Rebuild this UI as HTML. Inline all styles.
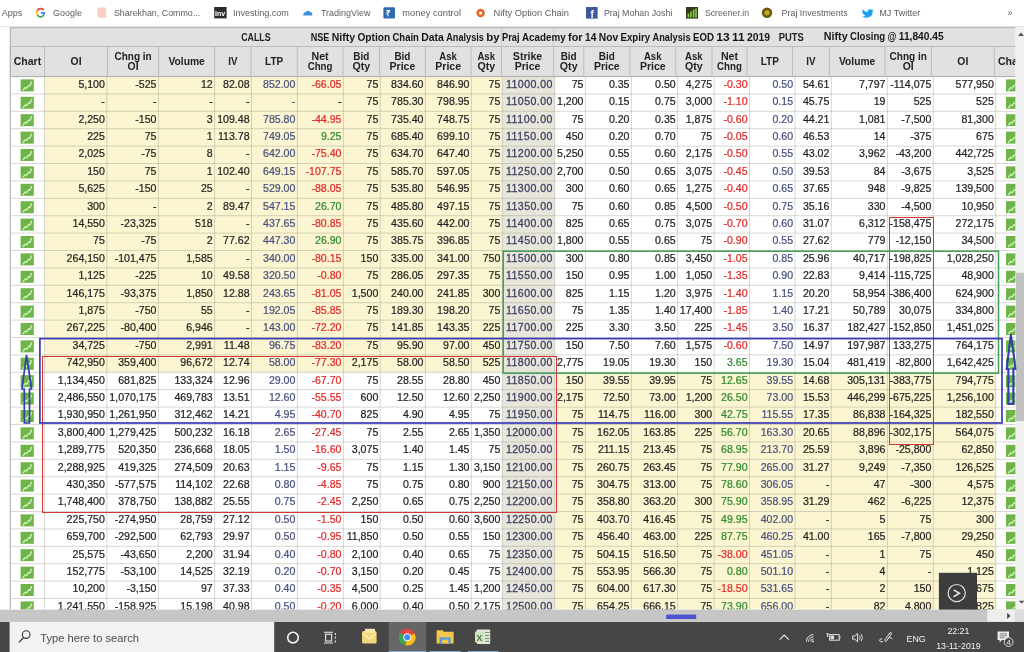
<!DOCTYPE html><html><head><meta charset="utf-8"><title>NSE Nifty Option Chain</title>
<style>html,body{margin:0;padding:0;background:#fff}body{width:1024px;height:652px;overflow:hidden;position:relative}svg{position:absolute;left:0;top:0;display:block;will-change:transform}text{font-family:"Liberation Sans",sans-serif}.d{font-size:10.6px;fill:#1f1f1f;text-anchor:end;stroke:#1f1f1f;stroke-width:0.22px}.h{font-size:10.5px;font-weight:bold;fill:#222;text-anchor:middle}.bk{font-size:9.3px;fill:#5a5d61}.tb{font-size:9.3px;fill:#f2f2f2}</style></head><body>
<svg width="1024" height="652" viewBox="0 0 1024 652">
<rect width="1024" height="652" fill="#fff"/>
<defs><clipPath id="vp"><rect x="0" y="26.8" width="1015.6" height="582.7"/></clipPath>
<g id="ci"><rect x="0" y="0" width="13.2" height="12" fill="#6fb448"/><polyline points="2.6,10.6 4.6,8.2 6.2,8.8 8,6 9.4,6.4 10.8,2.6" fill="none" stroke="#c4efae" stroke-width="1.5" stroke-linejoin="round" stroke-linecap="round"/></g>
</defs>
<rect x="0" y="0" width="1024" height="26.4" fill="#fff"/>
<rect x="0" y="26" width="1024" height="1.1" fill="#e4e4e4"/>
<g clip-path="url(#vp)">
<rect x="10.3" y="27.6" width="1019.7" height="48.9" fill="#e1e1e1"/>
<rect x="44.60" y="76.50" width="457.70" height="295.80" fill="#fbf5d1"/>
<rect x="554.70" y="372.30" width="441.00" height="261.00" fill="#fbf5d1"/>
<rect x="502.30" y="76.50" width="52.40" height="556.80" fill="#e8e6da"/>
<rect x="10.3" y="93.40" width="1019.7" height="1" fill="rgba(110,110,100,0.27)"/>
<rect x="10.3" y="110.80" width="1019.7" height="1" fill="rgba(110,110,100,0.27)"/>
<rect x="10.3" y="128.20" width="1019.7" height="1" fill="rgba(110,110,100,0.27)"/>
<rect x="10.3" y="145.60" width="1019.7" height="1" fill="rgba(110,110,100,0.27)"/>
<rect x="10.3" y="163.00" width="1019.7" height="1" fill="rgba(110,110,100,0.27)"/>
<rect x="10.3" y="180.40" width="1019.7" height="1" fill="rgba(110,110,100,0.27)"/>
<rect x="10.3" y="197.80" width="1019.7" height="1" fill="rgba(110,110,100,0.27)"/>
<rect x="10.3" y="215.20" width="1019.7" height="1" fill="rgba(110,110,100,0.27)"/>
<rect x="10.3" y="232.60" width="1019.7" height="1" fill="rgba(110,110,100,0.27)"/>
<rect x="10.3" y="250.00" width="1019.7" height="1" fill="rgba(110,110,100,0.27)"/>
<rect x="10.3" y="267.40" width="1019.7" height="1" fill="rgba(110,110,100,0.27)"/>
<rect x="10.3" y="284.80" width="1019.7" height="1" fill="rgba(110,110,100,0.27)"/>
<rect x="10.3" y="302.20" width="1019.7" height="1" fill="rgba(110,110,100,0.27)"/>
<rect x="10.3" y="319.60" width="1019.7" height="1" fill="rgba(110,110,100,0.27)"/>
<rect x="10.3" y="337.00" width="1019.7" height="1" fill="rgba(110,110,100,0.27)"/>
<rect x="10.3" y="354.40" width="1019.7" height="1" fill="rgba(110,110,100,0.27)"/>
<rect x="10.3" y="371.80" width="1019.7" height="1" fill="rgba(110,110,100,0.27)"/>
<rect x="10.3" y="389.20" width="1019.7" height="1" fill="rgba(110,110,100,0.27)"/>
<rect x="10.3" y="406.60" width="1019.7" height="1" fill="rgba(110,110,100,0.27)"/>
<rect x="10.3" y="424.00" width="1019.7" height="1" fill="rgba(110,110,100,0.27)"/>
<rect x="10.3" y="441.40" width="1019.7" height="1" fill="rgba(110,110,100,0.27)"/>
<rect x="10.3" y="458.80" width="1019.7" height="1" fill="rgba(110,110,100,0.27)"/>
<rect x="10.3" y="476.20" width="1019.7" height="1" fill="rgba(110,110,100,0.27)"/>
<rect x="10.3" y="493.60" width="1019.7" height="1" fill="rgba(110,110,100,0.27)"/>
<rect x="10.3" y="511.00" width="1019.7" height="1" fill="rgba(110,110,100,0.27)"/>
<rect x="10.3" y="528.40" width="1019.7" height="1" fill="rgba(110,110,100,0.27)"/>
<rect x="10.3" y="545.80" width="1019.7" height="1" fill="rgba(110,110,100,0.27)"/>
<rect x="10.3" y="563.20" width="1019.7" height="1" fill="rgba(110,110,100,0.27)"/>
<rect x="10.3" y="580.60" width="1019.7" height="1" fill="rgba(110,110,100,0.27)"/>
<rect x="10.3" y="598.00" width="1019.7" height="1" fill="rgba(110,110,100,0.27)"/>
<rect x="10.3" y="615.40" width="1019.7" height="1" fill="rgba(110,110,100,0.27)"/>
<rect x="10.3" y="632.80" width="1019.7" height="1" fill="rgba(110,110,100,0.27)"/>
<rect x="9.80" y="76.5" width="1" height="533.2" fill="rgba(110,110,100,0.27)"/>
<rect x="44.10" y="76.5" width="1" height="533.2" fill="rgba(110,110,100,0.27)"/>
<rect x="106.30" y="76.5" width="1" height="533.2" fill="rgba(110,110,100,0.27)"/>
<rect x="157.90" y="76.5" width="1" height="533.2" fill="rgba(110,110,100,0.27)"/>
<rect x="214.10" y="76.5" width="1" height="533.2" fill="rgba(110,110,100,0.27)"/>
<rect x="251.00" y="76.5" width="1" height="533.2" fill="rgba(110,110,100,0.27)"/>
<rect x="296.80" y="76.5" width="1" height="533.2" fill="rgba(110,110,100,0.27)"/>
<rect x="342.90" y="76.5" width="1" height="533.2" fill="rgba(110,110,100,0.27)"/>
<rect x="379.70" y="76.5" width="1" height="533.2" fill="rgba(110,110,100,0.27)"/>
<rect x="424.90" y="76.5" width="1" height="533.2" fill="rgba(110,110,100,0.27)"/>
<rect x="470.90" y="76.5" width="1" height="533.2" fill="rgba(110,110,100,0.27)"/>
<rect x="501.80" y="76.5" width="1" height="533.2" fill="rgba(110,110,100,0.27)"/>
<rect x="554.20" y="76.5" width="1" height="533.2" fill="rgba(110,110,100,0.27)"/>
<rect x="584.90" y="76.5" width="1" height="533.2" fill="rgba(110,110,100,0.27)"/>
<rect x="630.90" y="76.5" width="1" height="533.2" fill="rgba(110,110,100,0.27)"/>
<rect x="677.10" y="76.5" width="1" height="533.2" fill="rgba(110,110,100,0.27)"/>
<rect x="713.60" y="76.5" width="1" height="533.2" fill="rgba(110,110,100,0.27)"/>
<rect x="749.00" y="76.5" width="1" height="533.2" fill="rgba(110,110,100,0.27)"/>
<rect x="794.50" y="76.5" width="1" height="533.2" fill="rgba(110,110,100,0.27)"/>
<rect x="830.80" y="76.5" width="1" height="533.2" fill="rgba(110,110,100,0.27)"/>
<rect x="886.90" y="76.5" width="1" height="533.2" fill="rgba(110,110,100,0.27)"/>
<rect x="932.80" y="76.5" width="1" height="533.2" fill="rgba(110,110,100,0.27)"/>
<rect x="995.20" y="76.5" width="1" height="533.2" fill="rgba(110,110,100,0.27)"/>
<rect x="9.80" y="76.5" width="1" height="533.2" fill="#b4b4b4"/>
<rect x="10.3" y="27.1" width="1019.7" height="1.1" fill="#b2b2b2"/>
<rect x="10.3" y="46.0" width="1019.7" height="1" fill="#bcbcbc"/>
<rect x="10.3" y="75.9" width="1019.7" height="1.2" fill="#b4b4b4"/>
<rect x="9.80" y="46.5" width="1" height="30.0" fill="#bcbcbc"/>
<rect x="44.10" y="46.5" width="1" height="30.0" fill="#bcbcbc"/>
<rect x="107.10" y="46.5" width="1" height="30.0" fill="#bcbcbc"/>
<rect x="158.10" y="46.5" width="1" height="30.0" fill="#bcbcbc"/>
<rect x="214.10" y="46.5" width="1" height="30.0" fill="#bcbcbc"/>
<rect x="250.50" y="46.5" width="1" height="30.0" fill="#bcbcbc"/>
<rect x="296.70" y="46.5" width="1" height="30.0" fill="#bcbcbc"/>
<rect x="342.40" y="46.5" width="1" height="30.0" fill="#bcbcbc"/>
<rect x="379.10" y="46.5" width="1" height="30.0" fill="#bcbcbc"/>
<rect x="424.80" y="46.5" width="1" height="30.0" fill="#bcbcbc"/>
<rect x="470.50" y="46.5" width="1" height="30.0" fill="#bcbcbc"/>
<rect x="501.00" y="46.5" width="1" height="30.0" fill="#bcbcbc"/>
<rect x="553.10" y="46.5" width="1" height="30.0" fill="#bcbcbc"/>
<rect x="583.30" y="46.5" width="1" height="30.0" fill="#bcbcbc"/>
<rect x="629.30" y="46.5" width="1" height="30.0" fill="#bcbcbc"/>
<rect x="675.20" y="46.5" width="1" height="30.0" fill="#bcbcbc"/>
<rect x="711.50" y="46.5" width="1" height="30.0" fill="#bcbcbc"/>
<rect x="746.50" y="46.5" width="1" height="30.0" fill="#bcbcbc"/>
<rect x="792.00" y="46.5" width="1" height="30.0" fill="#bcbcbc"/>
<rect x="828.80" y="46.5" width="1" height="30.0" fill="#bcbcbc"/>
<rect x="884.50" y="46.5" width="1" height="30.0" fill="#bcbcbc"/>
<rect x="930.90" y="46.5" width="1" height="30.0" fill="#bcbcbc"/>
<rect x="993.80" y="46.5" width="1" height="30.0" fill="#bcbcbc"/>
<rect x="9.80" y="27.6" width="1" height="48.9" fill="#adadad"/>
<rect x="501.00" y="27.6" width="1" height="18.9" fill="#cdcdcd"/>
<rect x="553.10" y="27.6" width="1" height="18.9" fill="#cdcdcd"/>
<text class="h" style="text-anchor:start" x="13.73" y="65.1" textLength="27.45" lengthAdjust="spacingAndGlyphs">Chart</text>
<text class="h" style="text-anchor:start" x="70.60" y="65.1" textLength="11.00" lengthAdjust="spacingAndGlyphs">OI</text>
<text class="h" style="text-anchor:start" x="114.45" y="59.5" textLength="37.30" lengthAdjust="spacingAndGlyphs">Chng in</text>
<text class="h" style="text-anchor:start" x="127.60" y="69.6" textLength="11.00" lengthAdjust="spacingAndGlyphs">OI</text>
<text class="h" style="text-anchor:start" x="168.45" y="65.1" textLength="36.30" lengthAdjust="spacingAndGlyphs">Volume</text>
<text class="h" style="text-anchor:start" x="228.20" y="65.1" textLength="9.20" lengthAdjust="spacingAndGlyphs">IV</text>
<text class="h" style="text-anchor:start" x="265.05" y="65.1" textLength="18.10" lengthAdjust="spacingAndGlyphs">LTP</text>
<text class="h" style="text-anchor:start" x="311.50" y="59.5" textLength="17.10" lengthAdjust="spacingAndGlyphs">Net</text>
<text class="h" style="text-anchor:start" x="307.65" y="69.6" textLength="24.80" lengthAdjust="spacingAndGlyphs">Chng</text>
<text class="h" style="text-anchor:start" x="353.25" y="59.5" textLength="16.00" lengthAdjust="spacingAndGlyphs">Bid</text>
<text class="h" style="text-anchor:start" x="352.40" y="69.6" textLength="17.70" lengthAdjust="spacingAndGlyphs">Qty</text>
<text class="h" style="text-anchor:start" x="394.45" y="59.5" textLength="16.00" lengthAdjust="spacingAndGlyphs">Bid</text>
<text class="h" style="text-anchor:start" x="389.60" y="69.6" textLength="25.70" lengthAdjust="spacingAndGlyphs">Price</text>
<text class="h" style="text-anchor:start" x="439.35" y="59.5" textLength="17.60" lengthAdjust="spacingAndGlyphs">Ask</text>
<text class="h" style="text-anchor:start" x="435.30" y="69.6" textLength="25.70" lengthAdjust="spacingAndGlyphs">Price</text>
<text class="h" style="text-anchor:start" x="477.45" y="59.5" textLength="17.60" lengthAdjust="spacingAndGlyphs">Ask</text>
<text class="h" style="text-anchor:start" x="477.40" y="69.6" textLength="17.70" lengthAdjust="spacingAndGlyphs">Qty</text>
<text class="h" style="text-anchor:start" x="512.82" y="59.5" textLength="29.45" lengthAdjust="spacingAndGlyphs">Strike</text>
<text class="h" style="text-anchor:start" x="514.70" y="69.6" textLength="25.70" lengthAdjust="spacingAndGlyphs">Price</text>
<text class="h" style="text-anchor:start" x="560.70" y="59.5" textLength="16.00" lengthAdjust="spacingAndGlyphs">Bid</text>
<text class="h" style="text-anchor:start" x="559.85" y="69.6" textLength="17.70" lengthAdjust="spacingAndGlyphs">Qty</text>
<text class="h" style="text-anchor:start" x="598.80" y="59.5" textLength="16.00" lengthAdjust="spacingAndGlyphs">Bid</text>
<text class="h" style="text-anchor:start" x="593.95" y="69.6" textLength="25.70" lengthAdjust="spacingAndGlyphs">Price</text>
<text class="h" style="text-anchor:start" x="643.95" y="59.5" textLength="17.60" lengthAdjust="spacingAndGlyphs">Ask</text>
<text class="h" style="text-anchor:start" x="639.90" y="69.6" textLength="25.70" lengthAdjust="spacingAndGlyphs">Price</text>
<text class="h" style="text-anchor:start" x="685.05" y="59.5" textLength="17.60" lengthAdjust="spacingAndGlyphs">Ask</text>
<text class="h" style="text-anchor:start" x="685.00" y="69.6" textLength="17.70" lengthAdjust="spacingAndGlyphs">Qty</text>
<text class="h" style="text-anchor:start" x="720.95" y="59.5" textLength="17.10" lengthAdjust="spacingAndGlyphs">Net</text>
<text class="h" style="text-anchor:start" x="717.10" y="69.6" textLength="24.80" lengthAdjust="spacingAndGlyphs">Chng</text>
<text class="h" style="text-anchor:start" x="760.70" y="65.1" textLength="18.10" lengthAdjust="spacingAndGlyphs">LTP</text>
<text class="h" style="text-anchor:start" x="806.30" y="65.1" textLength="9.20" lengthAdjust="spacingAndGlyphs">IV</text>
<text class="h" style="text-anchor:start" x="839.00" y="65.1" textLength="36.30" lengthAdjust="spacingAndGlyphs">Volume</text>
<text class="h" style="text-anchor:start" x="889.55" y="59.5" textLength="37.30" lengthAdjust="spacingAndGlyphs">Chng in</text>
<text class="h" style="text-anchor:start" x="902.70" y="69.6" textLength="11.00" lengthAdjust="spacingAndGlyphs">OI</text>
<text class="h" style="text-anchor:start" x="957.35" y="65.1" textLength="11.00" lengthAdjust="spacingAndGlyphs">OI</text>
<text class="h" style="text-anchor:start" x="997.88" y="65.1" textLength="27.45" lengthAdjust="spacingAndGlyphs">Chart</text>
<text class="h" style="text-anchor:start;font-size:10.4px" x="241.2" y="40.7" textLength="29.4" lengthAdjust="spacingAndGlyphs">CALLS</text>
<text style="font-weight:bold;font-size:10.7px;fill:#151515" x="310.75" y="40.6" textLength="18.60" lengthAdjust="spacingAndGlyphs">NSE</text>
<text style="font-weight:bold;font-size:10.7px;fill:#151515" x="331.75" y="40.6" textLength="23.35" lengthAdjust="spacingAndGlyphs">Nifty</text>
<text style="font-weight:bold;font-size:10.7px;fill:#151515" x="357.50" y="40.6" textLength="32.60" lengthAdjust="spacingAndGlyphs">Option</text>
<text style="font-weight:bold;font-size:10.7px;fill:#151515" x="392.50" y="40.6" textLength="26.35" lengthAdjust="spacingAndGlyphs">Chain</text>
<text style="font-weight:bold;font-size:10.7px;fill:#151515" x="421.25" y="40.6" textLength="22.60" lengthAdjust="spacingAndGlyphs">Data</text>
<text style="font-weight:bold;font-size:10.7px;fill:#151515" x="446.25" y="40.6" textLength="37.60" lengthAdjust="spacingAndGlyphs">Analysis</text>
<text style="font-weight:bold;font-size:10.7px;fill:#151515" x="486.25" y="40.6" textLength="13.35" lengthAdjust="spacingAndGlyphs">by</text>
<text style="font-weight:bold;font-size:10.7px;fill:#151515" x="502.00" y="40.6" textLength="17.60" lengthAdjust="spacingAndGlyphs">Praj</text>
<text style="font-weight:bold;font-size:10.7px;fill:#151515" x="522.00" y="40.6" textLength="43.60" lengthAdjust="spacingAndGlyphs">Academy</text>
<text style="font-weight:bold;font-size:10.7px;fill:#151515" x="568.00" y="40.6" textLength="14.60" lengthAdjust="spacingAndGlyphs">for</text>
<text style="font-weight:bold;font-size:10.7px;fill:#151515" x="585.00" y="40.6" textLength="11.35" lengthAdjust="spacingAndGlyphs">14</text>
<text style="font-weight:bold;font-size:10.7px;fill:#151515" x="598.75" y="40.6" textLength="19.35" lengthAdjust="spacingAndGlyphs">Nov</text>
<text style="font-weight:bold;font-size:10.7px;fill:#151515" x="620.50" y="40.6" textLength="29.60" lengthAdjust="spacingAndGlyphs">Expiry</text>
<text style="font-weight:bold;font-size:10.7px;fill:#151515" x="652.50" y="40.6" textLength="38.10" lengthAdjust="spacingAndGlyphs">Analysis</text>
<text style="font-weight:bold;font-size:10.7px;fill:#151515" x="693.00" y="40.6" textLength="20.85" lengthAdjust="spacingAndGlyphs">EOD</text>
<text style="font-weight:bold;font-size:10.7px;fill:#151515" x="716.25" y="40.6" textLength="13.35" lengthAdjust="spacingAndGlyphs">13</text>
<text style="font-weight:bold;font-size:10.7px;fill:#151515" x="732.00" y="40.6" textLength="12.60" lengthAdjust="spacingAndGlyphs">11</text>
<text style="font-weight:bold;font-size:10.7px;fill:#151515" x="747.00" y="40.6" textLength="23.00" lengthAdjust="spacingAndGlyphs">2019</text>
<text class="h" style="text-anchor:start;font-size:10.4px" x="778.8" y="40.7" textLength="25" lengthAdjust="spacingAndGlyphs">PUTS</text>
<text style="font-weight:bold;font-size:10.7px;fill:#151515" x="823.75" y="40.4" textLength="23.85" lengthAdjust="spacingAndGlyphs">Nifty</text>
<text style="font-weight:bold;font-size:10.7px;fill:#151515" x="850.00" y="40.4" textLength="35.10" lengthAdjust="spacingAndGlyphs">Closing</text>
<text style="font-weight:bold;font-size:10.7px;fill:#151515" x="887.50" y="40.4" textLength="8.85" lengthAdjust="spacingAndGlyphs">@</text>
<text style="font-weight:bold;font-size:10.7px;fill:#151515" x="898.75" y="40.4" textLength="45.00" lengthAdjust="spacingAndGlyphs">11,840.45</text>
<text class="d" x="104.90" y="87.70">5,100</text>
<text class="d" x="156.50" y="87.70">-525</text>
<text class="d" x="212.70" y="87.70">12</text>
<text class="d" x="249.60" y="87.70">82.08</text>
<text class="d" x="295.40" y="87.70" style="fill:#48507e;stroke:#48507e">852.00</text>
<text class="d" x="341.50" y="87.70" style="fill:#e02a2a;stroke:#e02a2a">-66.05</text>
<text class="d" x="378.30" y="87.70">75</text>
<text class="d" x="423.50" y="87.70">834.60</text>
<text class="d" x="469.50" y="87.70">846.90</text>
<text class="d" x="500.40" y="87.70">75</text>
<text class="d" x="552.50" y="87.70" style="fill:#414166;stroke:#414166;stroke-width:0.3px" textLength="46.6" lengthAdjust="spacing">11000.00</text>
<text class="d" x="583.50" y="87.70">75</text>
<text class="d" x="629.50" y="87.70">0.35</text>
<text class="d" x="675.70" y="87.70">0.50</text>
<text class="d" x="712.20" y="87.70">4,275</text>
<text class="d" x="747.60" y="87.70" style="fill:#e02a2a;stroke:#e02a2a">-0.30</text>
<text class="d" x="793.10" y="87.70" style="fill:#48507e;stroke:#48507e">0.50</text>
<text class="d" x="829.40" y="87.70">54.61</text>
<text class="d" x="885.50" y="87.70">7,797</text>
<text class="d" x="931.40" y="87.70">-114,075</text>
<text class="d" x="993.80" y="87.70">577,950</text>
<use href="#ci" x="20.6" y="79.40"/>
<use href="#ci" x="1006" y="79.40"/>
<text class="d" x="104.90" y="105.10">-</text>
<text class="d" x="156.50" y="105.10">-</text>
<text class="d" x="212.70" y="105.10">-</text>
<text class="d" x="249.60" y="105.10">-</text>
<text class="d" x="295.40" y="105.10" style="fill:#48507e;stroke:#48507e">-</text>
<text class="d" x="341.50" y="105.10">-</text>
<text class="d" x="378.30" y="105.10">75</text>
<text class="d" x="423.50" y="105.10">785.30</text>
<text class="d" x="469.50" y="105.10">798.95</text>
<text class="d" x="500.40" y="105.10">75</text>
<text class="d" x="552.50" y="105.10" style="fill:#414166;stroke:#414166;stroke-width:0.3px" textLength="46.6" lengthAdjust="spacing">11050.00</text>
<text class="d" x="583.50" y="105.10">1,200</text>
<text class="d" x="629.50" y="105.10">0.15</text>
<text class="d" x="675.70" y="105.10">0.75</text>
<text class="d" x="712.20" y="105.10">3,000</text>
<text class="d" x="747.60" y="105.10" style="fill:#e02a2a;stroke:#e02a2a">-1.10</text>
<text class="d" x="793.10" y="105.10" style="fill:#48507e;stroke:#48507e">0.15</text>
<text class="d" x="829.40" y="105.10">45.75</text>
<text class="d" x="885.50" y="105.10">19</text>
<text class="d" x="931.40" y="105.10">525</text>
<text class="d" x="993.80" y="105.10">525</text>
<use href="#ci" x="20.6" y="96.80"/>
<use href="#ci" x="1006" y="96.80"/>
<text class="d" x="104.90" y="122.50">2,250</text>
<text class="d" x="156.50" y="122.50">-150</text>
<text class="d" x="212.70" y="122.50">3</text>
<text class="d" x="249.60" y="122.50">109.48</text>
<text class="d" x="295.40" y="122.50" style="fill:#48507e;stroke:#48507e">785.80</text>
<text class="d" x="341.50" y="122.50" style="fill:#e02a2a;stroke:#e02a2a">-44.95</text>
<text class="d" x="378.30" y="122.50">75</text>
<text class="d" x="423.50" y="122.50">735.40</text>
<text class="d" x="469.50" y="122.50">748.75</text>
<text class="d" x="500.40" y="122.50">75</text>
<text class="d" x="552.50" y="122.50" style="fill:#414166;stroke:#414166;stroke-width:0.3px" textLength="46.6" lengthAdjust="spacing">11100.00</text>
<text class="d" x="583.50" y="122.50">75</text>
<text class="d" x="629.50" y="122.50">0.20</text>
<text class="d" x="675.70" y="122.50">0.35</text>
<text class="d" x="712.20" y="122.50">1,875</text>
<text class="d" x="747.60" y="122.50" style="fill:#e02a2a;stroke:#e02a2a">-0.60</text>
<text class="d" x="793.10" y="122.50" style="fill:#48507e;stroke:#48507e">0.20</text>
<text class="d" x="829.40" y="122.50">44.21</text>
<text class="d" x="885.50" y="122.50">1,081</text>
<text class="d" x="931.40" y="122.50">-7,500</text>
<text class="d" x="993.80" y="122.50">81,300</text>
<use href="#ci" x="20.6" y="114.20"/>
<use href="#ci" x="1006" y="114.20"/>
<text class="d" x="104.90" y="139.90">225</text>
<text class="d" x="156.50" y="139.90">75</text>
<text class="d" x="212.70" y="139.90">1</text>
<text class="d" x="249.60" y="139.90">113.78</text>
<text class="d" x="295.40" y="139.90" style="fill:#48507e;stroke:#48507e">749.05</text>
<text class="d" x="341.50" y="139.90" style="fill:#2d8a2d;stroke:#2d8a2d">9.25</text>
<text class="d" x="378.30" y="139.90">75</text>
<text class="d" x="423.50" y="139.90">685.40</text>
<text class="d" x="469.50" y="139.90">699.10</text>
<text class="d" x="500.40" y="139.90">75</text>
<text class="d" x="552.50" y="139.90" style="fill:#414166;stroke:#414166;stroke-width:0.3px" textLength="46.6" lengthAdjust="spacing">11150.00</text>
<text class="d" x="583.50" y="139.90">450</text>
<text class="d" x="629.50" y="139.90">0.20</text>
<text class="d" x="675.70" y="139.90">0.70</text>
<text class="d" x="712.20" y="139.90">75</text>
<text class="d" x="747.60" y="139.90" style="fill:#e02a2a;stroke:#e02a2a">-0.05</text>
<text class="d" x="793.10" y="139.90" style="fill:#48507e;stroke:#48507e">0.60</text>
<text class="d" x="829.40" y="139.90">46.53</text>
<text class="d" x="885.50" y="139.90">14</text>
<text class="d" x="931.40" y="139.90">-375</text>
<text class="d" x="993.80" y="139.90">675</text>
<use href="#ci" x="20.6" y="131.60"/>
<use href="#ci" x="1006" y="131.60"/>
<text class="d" x="104.90" y="157.30">2,025</text>
<text class="d" x="156.50" y="157.30">-75</text>
<text class="d" x="212.70" y="157.30">8</text>
<text class="d" x="249.60" y="157.30">-</text>
<text class="d" x="295.40" y="157.30" style="fill:#48507e;stroke:#48507e">642.00</text>
<text class="d" x="341.50" y="157.30" style="fill:#e02a2a;stroke:#e02a2a">-75.40</text>
<text class="d" x="378.30" y="157.30">75</text>
<text class="d" x="423.50" y="157.30">634.70</text>
<text class="d" x="469.50" y="157.30">647.40</text>
<text class="d" x="500.40" y="157.30">75</text>
<text class="d" x="552.50" y="157.30" style="fill:#414166;stroke:#414166;stroke-width:0.3px" textLength="46.6" lengthAdjust="spacing">11200.00</text>
<text class="d" x="583.50" y="157.30">5,250</text>
<text class="d" x="629.50" y="157.30">0.55</text>
<text class="d" x="675.70" y="157.30">0.60</text>
<text class="d" x="712.20" y="157.30">2,175</text>
<text class="d" x="747.60" y="157.30" style="fill:#e02a2a;stroke:#e02a2a">-0.50</text>
<text class="d" x="793.10" y="157.30" style="fill:#48507e;stroke:#48507e">0.55</text>
<text class="d" x="829.40" y="157.30">43.02</text>
<text class="d" x="885.50" y="157.30">3,962</text>
<text class="d" x="931.40" y="157.30">-43,200</text>
<text class="d" x="993.80" y="157.30">442,725</text>
<use href="#ci" x="20.6" y="149.00"/>
<use href="#ci" x="1006" y="149.00"/>
<text class="d" x="104.90" y="174.70">150</text>
<text class="d" x="156.50" y="174.70">75</text>
<text class="d" x="212.70" y="174.70">1</text>
<text class="d" x="249.60" y="174.70">102.40</text>
<text class="d" x="295.40" y="174.70" style="fill:#48507e;stroke:#48507e">649.15</text>
<text class="d" x="341.50" y="174.70" style="fill:#e02a2a;stroke:#e02a2a">-107.75</text>
<text class="d" x="378.30" y="174.70">75</text>
<text class="d" x="423.50" y="174.70">585.70</text>
<text class="d" x="469.50" y="174.70">597.05</text>
<text class="d" x="500.40" y="174.70">75</text>
<text class="d" x="552.50" y="174.70" style="fill:#414166;stroke:#414166;stroke-width:0.3px" textLength="46.6" lengthAdjust="spacing">11250.00</text>
<text class="d" x="583.50" y="174.70">2,700</text>
<text class="d" x="629.50" y="174.70">0.50</text>
<text class="d" x="675.70" y="174.70">0.65</text>
<text class="d" x="712.20" y="174.70">3,075</text>
<text class="d" x="747.60" y="174.70" style="fill:#e02a2a;stroke:#e02a2a">-0.45</text>
<text class="d" x="793.10" y="174.70" style="fill:#48507e;stroke:#48507e">0.50</text>
<text class="d" x="829.40" y="174.70">39.53</text>
<text class="d" x="885.50" y="174.70">84</text>
<text class="d" x="931.40" y="174.70">-3,675</text>
<text class="d" x="993.80" y="174.70">3,525</text>
<use href="#ci" x="20.6" y="166.40"/>
<use href="#ci" x="1006" y="166.40"/>
<text class="d" x="104.90" y="192.10">5,625</text>
<text class="d" x="156.50" y="192.10">-150</text>
<text class="d" x="212.70" y="192.10">25</text>
<text class="d" x="249.60" y="192.10">-</text>
<text class="d" x="295.40" y="192.10" style="fill:#48507e;stroke:#48507e">529.00</text>
<text class="d" x="341.50" y="192.10" style="fill:#e02a2a;stroke:#e02a2a">-88.05</text>
<text class="d" x="378.30" y="192.10">75</text>
<text class="d" x="423.50" y="192.10">535.80</text>
<text class="d" x="469.50" y="192.10">546.95</text>
<text class="d" x="500.40" y="192.10">75</text>
<text class="d" x="552.50" y="192.10" style="fill:#414166;stroke:#414166;stroke-width:0.3px" textLength="46.6" lengthAdjust="spacing">11300.00</text>
<text class="d" x="583.50" y="192.10">300</text>
<text class="d" x="629.50" y="192.10">0.60</text>
<text class="d" x="675.70" y="192.10">0.65</text>
<text class="d" x="712.20" y="192.10">1,275</text>
<text class="d" x="747.60" y="192.10" style="fill:#e02a2a;stroke:#e02a2a">-0.40</text>
<text class="d" x="793.10" y="192.10" style="fill:#48507e;stroke:#48507e">0.65</text>
<text class="d" x="829.40" y="192.10">37.65</text>
<text class="d" x="885.50" y="192.10">948</text>
<text class="d" x="931.40" y="192.10">-9,825</text>
<text class="d" x="993.80" y="192.10">139,500</text>
<use href="#ci" x="20.6" y="183.80"/>
<use href="#ci" x="1006" y="183.80"/>
<text class="d" x="104.90" y="209.50">300</text>
<text class="d" x="156.50" y="209.50">-</text>
<text class="d" x="212.70" y="209.50">2</text>
<text class="d" x="249.60" y="209.50">89.47</text>
<text class="d" x="295.40" y="209.50" style="fill:#48507e;stroke:#48507e">547.15</text>
<text class="d" x="341.50" y="209.50" style="fill:#2d8a2d;stroke:#2d8a2d">26.70</text>
<text class="d" x="378.30" y="209.50">75</text>
<text class="d" x="423.50" y="209.50">485.80</text>
<text class="d" x="469.50" y="209.50">497.15</text>
<text class="d" x="500.40" y="209.50">75</text>
<text class="d" x="552.50" y="209.50" style="fill:#414166;stroke:#414166;stroke-width:0.3px" textLength="46.6" lengthAdjust="spacing">11350.00</text>
<text class="d" x="583.50" y="209.50">75</text>
<text class="d" x="629.50" y="209.50">0.60</text>
<text class="d" x="675.70" y="209.50">0.85</text>
<text class="d" x="712.20" y="209.50">4,500</text>
<text class="d" x="747.60" y="209.50" style="fill:#e02a2a;stroke:#e02a2a">-0.50</text>
<text class="d" x="793.10" y="209.50" style="fill:#48507e;stroke:#48507e">0.75</text>
<text class="d" x="829.40" y="209.50">35.16</text>
<text class="d" x="885.50" y="209.50">330</text>
<text class="d" x="931.40" y="209.50">-4,500</text>
<text class="d" x="993.80" y="209.50">10,950</text>
<use href="#ci" x="20.6" y="201.20"/>
<use href="#ci" x="1006" y="201.20"/>
<text class="d" x="104.90" y="226.90">14,550</text>
<text class="d" x="156.50" y="226.90">-23,325</text>
<text class="d" x="212.70" y="226.90">518</text>
<text class="d" x="249.60" y="226.90">-</text>
<text class="d" x="295.40" y="226.90" style="fill:#48507e;stroke:#48507e">437.65</text>
<text class="d" x="341.50" y="226.90" style="fill:#e02a2a;stroke:#e02a2a">-80.85</text>
<text class="d" x="378.30" y="226.90">75</text>
<text class="d" x="423.50" y="226.90">435.60</text>
<text class="d" x="469.50" y="226.90">442.00</text>
<text class="d" x="500.40" y="226.90">75</text>
<text class="d" x="552.50" y="226.90" style="fill:#414166;stroke:#414166;stroke-width:0.3px" textLength="46.6" lengthAdjust="spacing">11400.00</text>
<text class="d" x="583.50" y="226.90">825</text>
<text class="d" x="629.50" y="226.90">0.65</text>
<text class="d" x="675.70" y="226.90">0.75</text>
<text class="d" x="712.20" y="226.90">3,075</text>
<text class="d" x="747.60" y="226.90" style="fill:#e02a2a;stroke:#e02a2a">-0.70</text>
<text class="d" x="793.10" y="226.90" style="fill:#48507e;stroke:#48507e">0.60</text>
<text class="d" x="829.40" y="226.90">31.07</text>
<text class="d" x="885.50" y="226.90">6,312</text>
<text class="d" x="931.40" y="226.90">-158,475</text>
<text class="d" x="993.80" y="226.90">272,175</text>
<use href="#ci" x="20.6" y="218.60"/>
<use href="#ci" x="1006" y="218.60"/>
<text class="d" x="104.90" y="244.30">75</text>
<text class="d" x="156.50" y="244.30">-75</text>
<text class="d" x="212.70" y="244.30">2</text>
<text class="d" x="249.60" y="244.30">77.62</text>
<text class="d" x="295.40" y="244.30" style="fill:#48507e;stroke:#48507e">447.30</text>
<text class="d" x="341.50" y="244.30" style="fill:#2d8a2d;stroke:#2d8a2d">26.90</text>
<text class="d" x="378.30" y="244.30">75</text>
<text class="d" x="423.50" y="244.30">385.75</text>
<text class="d" x="469.50" y="244.30">396.85</text>
<text class="d" x="500.40" y="244.30">75</text>
<text class="d" x="552.50" y="244.30" style="fill:#414166;stroke:#414166;stroke-width:0.3px" textLength="46.6" lengthAdjust="spacing">11450.00</text>
<text class="d" x="583.50" y="244.30">1,800</text>
<text class="d" x="629.50" y="244.30">0.55</text>
<text class="d" x="675.70" y="244.30">0.65</text>
<text class="d" x="712.20" y="244.30">75</text>
<text class="d" x="747.60" y="244.30" style="fill:#e02a2a;stroke:#e02a2a">-0.90</text>
<text class="d" x="793.10" y="244.30" style="fill:#48507e;stroke:#48507e">0.55</text>
<text class="d" x="829.40" y="244.30">27.62</text>
<text class="d" x="885.50" y="244.30">779</text>
<text class="d" x="931.40" y="244.30">-12,150</text>
<text class="d" x="993.80" y="244.30">34,500</text>
<use href="#ci" x="20.6" y="236.00"/>
<use href="#ci" x="1006" y="236.00"/>
<text class="d" x="104.90" y="261.70">264,150</text>
<text class="d" x="156.50" y="261.70">-101,475</text>
<text class="d" x="212.70" y="261.70">1,585</text>
<text class="d" x="249.60" y="261.70">-</text>
<text class="d" x="295.40" y="261.70" style="fill:#48507e;stroke:#48507e">340.00</text>
<text class="d" x="341.50" y="261.70" style="fill:#e02a2a;stroke:#e02a2a">-80.15</text>
<text class="d" x="378.30" y="261.70">150</text>
<text class="d" x="423.50" y="261.70">335.00</text>
<text class="d" x="469.50" y="261.70">341.00</text>
<text class="d" x="500.40" y="261.70">750</text>
<text class="d" x="552.50" y="261.70" style="fill:#414166;stroke:#414166;stroke-width:0.3px" textLength="46.6" lengthAdjust="spacing">11500.00</text>
<text class="d" x="583.50" y="261.70">300</text>
<text class="d" x="629.50" y="261.70">0.80</text>
<text class="d" x="675.70" y="261.70">0.85</text>
<text class="d" x="712.20" y="261.70">3,450</text>
<text class="d" x="747.60" y="261.70" style="fill:#e02a2a;stroke:#e02a2a">-1.05</text>
<text class="d" x="793.10" y="261.70" style="fill:#48507e;stroke:#48507e">0.85</text>
<text class="d" x="829.40" y="261.70">25.96</text>
<text class="d" x="885.50" y="261.70">40,717</text>
<text class="d" x="931.40" y="261.70">-198,825</text>
<text class="d" x="993.80" y="261.70">1,028,250</text>
<use href="#ci" x="20.6" y="253.40"/>
<use href="#ci" x="1006" y="253.40"/>
<text class="d" x="104.90" y="279.10">1,125</text>
<text class="d" x="156.50" y="279.10">-225</text>
<text class="d" x="212.70" y="279.10">10</text>
<text class="d" x="249.60" y="279.10">49.58</text>
<text class="d" x="295.40" y="279.10" style="fill:#48507e;stroke:#48507e">320.50</text>
<text class="d" x="341.50" y="279.10" style="fill:#e02a2a;stroke:#e02a2a">-0.80</text>
<text class="d" x="378.30" y="279.10">75</text>
<text class="d" x="423.50" y="279.10">286.05</text>
<text class="d" x="469.50" y="279.10">297.35</text>
<text class="d" x="500.40" y="279.10">75</text>
<text class="d" x="552.50" y="279.10" style="fill:#414166;stroke:#414166;stroke-width:0.3px" textLength="46.6" lengthAdjust="spacing">11550.00</text>
<text class="d" x="583.50" y="279.10">150</text>
<text class="d" x="629.50" y="279.10">0.95</text>
<text class="d" x="675.70" y="279.10">1.00</text>
<text class="d" x="712.20" y="279.10">1,050</text>
<text class="d" x="747.60" y="279.10" style="fill:#e02a2a;stroke:#e02a2a">-1.35</text>
<text class="d" x="793.10" y="279.10" style="fill:#48507e;stroke:#48507e">0.90</text>
<text class="d" x="829.40" y="279.10">22.83</text>
<text class="d" x="885.50" y="279.10">9,414</text>
<text class="d" x="931.40" y="279.10">-115,725</text>
<text class="d" x="993.80" y="279.10">48,900</text>
<use href="#ci" x="20.6" y="270.80"/>
<use href="#ci" x="1006" y="270.80"/>
<text class="d" x="104.90" y="296.50">146,175</text>
<text class="d" x="156.50" y="296.50">-93,375</text>
<text class="d" x="212.70" y="296.50">1,850</text>
<text class="d" x="249.60" y="296.50">12.88</text>
<text class="d" x="295.40" y="296.50" style="fill:#48507e;stroke:#48507e">243.65</text>
<text class="d" x="341.50" y="296.50" style="fill:#e02a2a;stroke:#e02a2a">-81.05</text>
<text class="d" x="378.30" y="296.50">1,500</text>
<text class="d" x="423.50" y="296.50">240.00</text>
<text class="d" x="469.50" y="296.50">241.85</text>
<text class="d" x="500.40" y="296.50">300</text>
<text class="d" x="552.50" y="296.50" style="fill:#414166;stroke:#414166;stroke-width:0.3px" textLength="46.6" lengthAdjust="spacing">11600.00</text>
<text class="d" x="583.50" y="296.50">825</text>
<text class="d" x="629.50" y="296.50">1.15</text>
<text class="d" x="675.70" y="296.50">1.20</text>
<text class="d" x="712.20" y="296.50">3,975</text>
<text class="d" x="747.60" y="296.50" style="fill:#e02a2a;stroke:#e02a2a">-1.40</text>
<text class="d" x="793.10" y="296.50" style="fill:#48507e;stroke:#48507e">1.15</text>
<text class="d" x="829.40" y="296.50">20.20</text>
<text class="d" x="885.50" y="296.50">58,954</text>
<text class="d" x="931.40" y="296.50">-386,400</text>
<text class="d" x="993.80" y="296.50">624,900</text>
<use href="#ci" x="20.6" y="288.20"/>
<use href="#ci" x="1006" y="288.20"/>
<text class="d" x="104.90" y="313.90">1,875</text>
<text class="d" x="156.50" y="313.90">-750</text>
<text class="d" x="212.70" y="313.90">55</text>
<text class="d" x="249.60" y="313.90">-</text>
<text class="d" x="295.40" y="313.90" style="fill:#48507e;stroke:#48507e">192.05</text>
<text class="d" x="341.50" y="313.90" style="fill:#e02a2a;stroke:#e02a2a">-85.85</text>
<text class="d" x="378.30" y="313.90">75</text>
<text class="d" x="423.50" y="313.90">189.30</text>
<text class="d" x="469.50" y="313.90">198.20</text>
<text class="d" x="500.40" y="313.90">75</text>
<text class="d" x="552.50" y="313.90" style="fill:#414166;stroke:#414166;stroke-width:0.3px" textLength="46.6" lengthAdjust="spacing">11650.00</text>
<text class="d" x="583.50" y="313.90">75</text>
<text class="d" x="629.50" y="313.90">1.35</text>
<text class="d" x="675.70" y="313.90">1.40</text>
<text class="d" x="712.20" y="313.90">17,400</text>
<text class="d" x="747.60" y="313.90" style="fill:#e02a2a;stroke:#e02a2a">-1.85</text>
<text class="d" x="793.10" y="313.90" style="fill:#48507e;stroke:#48507e">1.40</text>
<text class="d" x="829.40" y="313.90">17.21</text>
<text class="d" x="885.50" y="313.90">50,789</text>
<text class="d" x="931.40" y="313.90">30,075</text>
<text class="d" x="993.80" y="313.90">334,800</text>
<use href="#ci" x="20.6" y="305.60"/>
<use href="#ci" x="1006" y="305.60"/>
<text class="d" x="104.90" y="331.30">267,225</text>
<text class="d" x="156.50" y="331.30">-80,400</text>
<text class="d" x="212.70" y="331.30">6,946</text>
<text class="d" x="249.60" y="331.30">-</text>
<text class="d" x="295.40" y="331.30" style="fill:#48507e;stroke:#48507e">143.00</text>
<text class="d" x="341.50" y="331.30" style="fill:#e02a2a;stroke:#e02a2a">-72.20</text>
<text class="d" x="378.30" y="331.30">75</text>
<text class="d" x="423.50" y="331.30">141.85</text>
<text class="d" x="469.50" y="331.30">143.35</text>
<text class="d" x="500.40" y="331.30">225</text>
<text class="d" x="552.50" y="331.30" style="fill:#414166;stroke:#414166;stroke-width:0.3px" textLength="46.6" lengthAdjust="spacing">11700.00</text>
<text class="d" x="583.50" y="331.30">225</text>
<text class="d" x="629.50" y="331.30">3.30</text>
<text class="d" x="675.70" y="331.30">3.50</text>
<text class="d" x="712.20" y="331.30">225</text>
<text class="d" x="747.60" y="331.30" style="fill:#e02a2a;stroke:#e02a2a">-1.45</text>
<text class="d" x="793.10" y="331.30" style="fill:#48507e;stroke:#48507e">3.50</text>
<text class="d" x="829.40" y="331.30">16.37</text>
<text class="d" x="885.50" y="331.30">182,427</text>
<text class="d" x="931.40" y="331.30">-152,850</text>
<text class="d" x="993.80" y="331.30">1,451,025</text>
<use href="#ci" x="20.6" y="323.00"/>
<use href="#ci" x="1006" y="323.00"/>
<text class="d" x="104.90" y="348.70">34,725</text>
<text class="d" x="156.50" y="348.70">-750</text>
<text class="d" x="212.70" y="348.70">2,991</text>
<text class="d" x="249.60" y="348.70">11.48</text>
<text class="d" x="295.40" y="348.70" style="fill:#48507e;stroke:#48507e">96.75</text>
<text class="d" x="341.50" y="348.70" style="fill:#e02a2a;stroke:#e02a2a">-83.20</text>
<text class="d" x="378.30" y="348.70">75</text>
<text class="d" x="423.50" y="348.70">95.90</text>
<text class="d" x="469.50" y="348.70">97.00</text>
<text class="d" x="500.40" y="348.70">450</text>
<text class="d" x="552.50" y="348.70" style="fill:#414166;stroke:#414166;stroke-width:0.3px" textLength="46.6" lengthAdjust="spacing">11750.00</text>
<text class="d" x="583.50" y="348.70">150</text>
<text class="d" x="629.50" y="348.70">7.50</text>
<text class="d" x="675.70" y="348.70">7.60</text>
<text class="d" x="712.20" y="348.70">1,575</text>
<text class="d" x="747.60" y="348.70" style="fill:#e02a2a;stroke:#e02a2a">-0.60</text>
<text class="d" x="793.10" y="348.70" style="fill:#48507e;stroke:#48507e">7.50</text>
<text class="d" x="829.40" y="348.70">14.97</text>
<text class="d" x="885.50" y="348.70">197,987</text>
<text class="d" x="931.40" y="348.70">133,275</text>
<text class="d" x="993.80" y="348.70">764,175</text>
<use href="#ci" x="20.6" y="340.40"/>
<use href="#ci" x="1006" y="340.40"/>
<text class="d" x="104.90" y="366.10">742,950</text>
<text class="d" x="156.50" y="366.10">359,400</text>
<text class="d" x="212.70" y="366.10">96,672</text>
<text class="d" x="249.60" y="366.10">12.74</text>
<text class="d" x="295.40" y="366.10" style="fill:#48507e;stroke:#48507e">58.00</text>
<text class="d" x="341.50" y="366.10" style="fill:#e02a2a;stroke:#e02a2a">-77.30</text>
<text class="d" x="378.30" y="366.10">2,175</text>
<text class="d" x="423.50" y="366.10">58.00</text>
<text class="d" x="469.50" y="366.10">58.50</text>
<text class="d" x="500.40" y="366.10">525</text>
<text class="d" x="552.50" y="366.10" style="fill:#414166;stroke:#414166;stroke-width:0.3px" textLength="46.6" lengthAdjust="spacing">11800.00</text>
<text class="d" x="583.50" y="366.10">2,775</text>
<text class="d" x="629.50" y="366.10">19.05</text>
<text class="d" x="675.70" y="366.10">19.30</text>
<text class="d" x="712.20" y="366.10">150</text>
<text class="d" x="747.60" y="366.10" style="fill:#2d8a2d;stroke:#2d8a2d">3.65</text>
<text class="d" x="793.10" y="366.10" style="fill:#48507e;stroke:#48507e">19.30</text>
<text class="d" x="829.40" y="366.10">15.04</text>
<text class="d" x="885.50" y="366.10">481,419</text>
<text class="d" x="931.40" y="366.10">-82,800</text>
<text class="d" x="993.80" y="366.10">1,642,425</text>
<use href="#ci" x="20.6" y="357.80"/>
<use href="#ci" x="1006" y="357.80"/>
<text class="d" x="104.90" y="383.50">1,134,450</text>
<text class="d" x="156.50" y="383.50">681,825</text>
<text class="d" x="212.70" y="383.50">133,324</text>
<text class="d" x="249.60" y="383.50">12.96</text>
<text class="d" x="295.40" y="383.50" style="fill:#48507e;stroke:#48507e">29.00</text>
<text class="d" x="341.50" y="383.50" style="fill:#e02a2a;stroke:#e02a2a">-67.70</text>
<text class="d" x="378.30" y="383.50">75</text>
<text class="d" x="423.50" y="383.50">28.55</text>
<text class="d" x="469.50" y="383.50">28.80</text>
<text class="d" x="500.40" y="383.50">450</text>
<text class="d" x="552.50" y="383.50" style="fill:#414166;stroke:#414166;stroke-width:0.3px" textLength="46.6" lengthAdjust="spacing">11850.00</text>
<text class="d" x="583.50" y="383.50">150</text>
<text class="d" x="629.50" y="383.50">39.55</text>
<text class="d" x="675.70" y="383.50">39.95</text>
<text class="d" x="712.20" y="383.50">75</text>
<text class="d" x="747.60" y="383.50" style="fill:#2d8a2d;stroke:#2d8a2d">12.65</text>
<text class="d" x="793.10" y="383.50" style="fill:#48507e;stroke:#48507e">39.55</text>
<text class="d" x="829.40" y="383.50">14.68</text>
<text class="d" x="885.50" y="383.50">305,131</text>
<text class="d" x="931.40" y="383.50">-383,775</text>
<text class="d" x="993.80" y="383.50">794,775</text>
<use href="#ci" x="20.6" y="375.20"/>
<use href="#ci" x="1006" y="375.20"/>
<text class="d" x="104.90" y="400.90">2,486,550</text>
<text class="d" x="156.50" y="400.90">1,070,175</text>
<text class="d" x="212.70" y="400.90">469,783</text>
<text class="d" x="249.60" y="400.90">13.51</text>
<text class="d" x="295.40" y="400.90" style="fill:#48507e;stroke:#48507e">12.60</text>
<text class="d" x="341.50" y="400.90" style="fill:#e02a2a;stroke:#e02a2a">-55.55</text>
<text class="d" x="378.30" y="400.90">600</text>
<text class="d" x="423.50" y="400.90">12.50</text>
<text class="d" x="469.50" y="400.90">12.60</text>
<text class="d" x="500.40" y="400.90">2,250</text>
<text class="d" x="552.50" y="400.90" style="fill:#414166;stroke:#414166;stroke-width:0.3px" textLength="46.6" lengthAdjust="spacing">11900.00</text>
<text class="d" x="583.50" y="400.90">2,175</text>
<text class="d" x="629.50" y="400.90">72.50</text>
<text class="d" x="675.70" y="400.90">73.00</text>
<text class="d" x="712.20" y="400.90">1,200</text>
<text class="d" x="747.60" y="400.90" style="fill:#2d8a2d;stroke:#2d8a2d">26.50</text>
<text class="d" x="793.10" y="400.90" style="fill:#48507e;stroke:#48507e">73.00</text>
<text class="d" x="829.40" y="400.90">15.53</text>
<text class="d" x="885.50" y="400.90">446,299</text>
<text class="d" x="931.40" y="400.90">-675,225</text>
<text class="d" x="993.80" y="400.90">1,256,100</text>
<use href="#ci" x="20.6" y="392.60"/>
<use href="#ci" x="1006" y="392.60"/>
<text class="d" x="104.90" y="418.30">1,930,950</text>
<text class="d" x="156.50" y="418.30">1,261,950</text>
<text class="d" x="212.70" y="418.30">312,462</text>
<text class="d" x="249.60" y="418.30">14.21</text>
<text class="d" x="295.40" y="418.30" style="fill:#48507e;stroke:#48507e">4.95</text>
<text class="d" x="341.50" y="418.30" style="fill:#e02a2a;stroke:#e02a2a">-40.70</text>
<text class="d" x="378.30" y="418.30">825</text>
<text class="d" x="423.50" y="418.30">4.90</text>
<text class="d" x="469.50" y="418.30">4.95</text>
<text class="d" x="500.40" y="418.30">75</text>
<text class="d" x="552.50" y="418.30" style="fill:#414166;stroke:#414166;stroke-width:0.3px" textLength="46.6" lengthAdjust="spacing">11950.00</text>
<text class="d" x="583.50" y="418.30">75</text>
<text class="d" x="629.50" y="418.30">114.75</text>
<text class="d" x="675.70" y="418.30">116.00</text>
<text class="d" x="712.20" y="418.30">300</text>
<text class="d" x="747.60" y="418.30" style="fill:#2d8a2d;stroke:#2d8a2d">42.75</text>
<text class="d" x="793.10" y="418.30" style="fill:#48507e;stroke:#48507e">115.55</text>
<text class="d" x="829.40" y="418.30">17.35</text>
<text class="d" x="885.50" y="418.30">86,838</text>
<text class="d" x="931.40" y="418.30">-164,325</text>
<text class="d" x="993.80" y="418.30">182,550</text>
<use href="#ci" x="20.6" y="410.00"/>
<use href="#ci" x="1006" y="410.00"/>
<text class="d" x="104.90" y="435.70">3,800,400</text>
<text class="d" x="156.50" y="435.70">1,279,425</text>
<text class="d" x="212.70" y="435.70">500,232</text>
<text class="d" x="249.60" y="435.70">16.18</text>
<text class="d" x="295.40" y="435.70" style="fill:#48507e;stroke:#48507e">2.65</text>
<text class="d" x="341.50" y="435.70" style="fill:#e02a2a;stroke:#e02a2a">-27.45</text>
<text class="d" x="378.30" y="435.70">75</text>
<text class="d" x="423.50" y="435.70">2.55</text>
<text class="d" x="469.50" y="435.70">2.65</text>
<text class="d" x="500.40" y="435.70">1,350</text>
<text class="d" x="552.50" y="435.70" style="fill:#414166;stroke:#414166;stroke-width:0.3px" textLength="46.6" lengthAdjust="spacing">12000.00</text>
<text class="d" x="583.50" y="435.70">75</text>
<text class="d" x="629.50" y="435.70">162.05</text>
<text class="d" x="675.70" y="435.70">163.85</text>
<text class="d" x="712.20" y="435.70">225</text>
<text class="d" x="747.60" y="435.70" style="fill:#2d8a2d;stroke:#2d8a2d">56.70</text>
<text class="d" x="793.10" y="435.70" style="fill:#48507e;stroke:#48507e">163.30</text>
<text class="d" x="829.40" y="435.70">20.65</text>
<text class="d" x="885.50" y="435.70">88,896</text>
<text class="d" x="931.40" y="435.70">-302,175</text>
<text class="d" x="993.80" y="435.70">564,075</text>
<use href="#ci" x="20.6" y="427.40"/>
<use href="#ci" x="1006" y="427.40"/>
<text class="d" x="104.90" y="453.10">1,289,775</text>
<text class="d" x="156.50" y="453.10">520,350</text>
<text class="d" x="212.70" y="453.10">236,668</text>
<text class="d" x="249.60" y="453.10">18.05</text>
<text class="d" x="295.40" y="453.10" style="fill:#48507e;stroke:#48507e">1.50</text>
<text class="d" x="341.50" y="453.10" style="fill:#e02a2a;stroke:#e02a2a">-16.60</text>
<text class="d" x="378.30" y="453.10">3,075</text>
<text class="d" x="423.50" y="453.10">1.40</text>
<text class="d" x="469.50" y="453.10">1.45</text>
<text class="d" x="500.40" y="453.10">75</text>
<text class="d" x="552.50" y="453.10" style="fill:#414166;stroke:#414166;stroke-width:0.3px" textLength="46.6" lengthAdjust="spacing">12050.00</text>
<text class="d" x="583.50" y="453.10">75</text>
<text class="d" x="629.50" y="453.10">211.15</text>
<text class="d" x="675.70" y="453.10">213.45</text>
<text class="d" x="712.20" y="453.10">75</text>
<text class="d" x="747.60" y="453.10" style="fill:#2d8a2d;stroke:#2d8a2d">68.95</text>
<text class="d" x="793.10" y="453.10" style="fill:#48507e;stroke:#48507e">213.70</text>
<text class="d" x="829.40" y="453.10">25.59</text>
<text class="d" x="885.50" y="453.10">3,896</text>
<text class="d" x="931.40" y="453.10">-25,800</text>
<text class="d" x="993.80" y="453.10">62,850</text>
<use href="#ci" x="20.6" y="444.80"/>
<use href="#ci" x="1006" y="444.80"/>
<text class="d" x="104.90" y="470.50">2,288,925</text>
<text class="d" x="156.50" y="470.50">419,325</text>
<text class="d" x="212.70" y="470.50">274,509</text>
<text class="d" x="249.60" y="470.50">20.63</text>
<text class="d" x="295.40" y="470.50" style="fill:#48507e;stroke:#48507e">1.15</text>
<text class="d" x="341.50" y="470.50" style="fill:#e02a2a;stroke:#e02a2a">-9.65</text>
<text class="d" x="378.30" y="470.50">75</text>
<text class="d" x="423.50" y="470.50">1.15</text>
<text class="d" x="469.50" y="470.50">1.30</text>
<text class="d" x="500.40" y="470.50">3,150</text>
<text class="d" x="552.50" y="470.50" style="fill:#414166;stroke:#414166;stroke-width:0.3px" textLength="46.6" lengthAdjust="spacing">12100.00</text>
<text class="d" x="583.50" y="470.50">75</text>
<text class="d" x="629.50" y="470.50">260.75</text>
<text class="d" x="675.70" y="470.50">263.45</text>
<text class="d" x="712.20" y="470.50">75</text>
<text class="d" x="747.60" y="470.50" style="fill:#2d8a2d;stroke:#2d8a2d">77.90</text>
<text class="d" x="793.10" y="470.50" style="fill:#48507e;stroke:#48507e">265.00</text>
<text class="d" x="829.40" y="470.50">31.27</text>
<text class="d" x="885.50" y="470.50">9,249</text>
<text class="d" x="931.40" y="470.50">-7,350</text>
<text class="d" x="993.80" y="470.50">126,525</text>
<use href="#ci" x="20.6" y="462.20"/>
<use href="#ci" x="1006" y="462.20"/>
<text class="d" x="104.90" y="487.90">430,350</text>
<text class="d" x="156.50" y="487.90">-577,575</text>
<text class="d" x="212.70" y="487.90">114,102</text>
<text class="d" x="249.60" y="487.90">22.68</text>
<text class="d" x="295.40" y="487.90" style="fill:#48507e;stroke:#48507e">0.80</text>
<text class="d" x="341.50" y="487.90" style="fill:#e02a2a;stroke:#e02a2a">-4.85</text>
<text class="d" x="378.30" y="487.90">75</text>
<text class="d" x="423.50" y="487.90">0.75</text>
<text class="d" x="469.50" y="487.90">0.80</text>
<text class="d" x="500.40" y="487.90">900</text>
<text class="d" x="552.50" y="487.90" style="fill:#414166;stroke:#414166;stroke-width:0.3px" textLength="46.6" lengthAdjust="spacing">12150.00</text>
<text class="d" x="583.50" y="487.90">75</text>
<text class="d" x="629.50" y="487.90">304.75</text>
<text class="d" x="675.70" y="487.90">313.00</text>
<text class="d" x="712.20" y="487.90">75</text>
<text class="d" x="747.60" y="487.90" style="fill:#2d8a2d;stroke:#2d8a2d">78.60</text>
<text class="d" x="793.10" y="487.90" style="fill:#48507e;stroke:#48507e">306.05</text>
<text class="d" x="829.40" y="487.90">-</text>
<text class="d" x="885.50" y="487.90">47</text>
<text class="d" x="931.40" y="487.90">-300</text>
<text class="d" x="993.80" y="487.90">4,575</text>
<use href="#ci" x="20.6" y="479.60"/>
<use href="#ci" x="1006" y="479.60"/>
<text class="d" x="104.90" y="505.30">1,748,400</text>
<text class="d" x="156.50" y="505.30">378,750</text>
<text class="d" x="212.70" y="505.30">138,882</text>
<text class="d" x="249.60" y="505.30">25.55</text>
<text class="d" x="295.40" y="505.30" style="fill:#48507e;stroke:#48507e">0.75</text>
<text class="d" x="341.50" y="505.30" style="fill:#e02a2a;stroke:#e02a2a">-2.45</text>
<text class="d" x="378.30" y="505.30">2,250</text>
<text class="d" x="423.50" y="505.30">0.65</text>
<text class="d" x="469.50" y="505.30">0.75</text>
<text class="d" x="500.40" y="505.30">2,250</text>
<text class="d" x="552.50" y="505.30" style="fill:#414166;stroke:#414166;stroke-width:0.3px" textLength="46.6" lengthAdjust="spacing">12200.00</text>
<text class="d" x="583.50" y="505.30">75</text>
<text class="d" x="629.50" y="505.30">358.80</text>
<text class="d" x="675.70" y="505.30">363.20</text>
<text class="d" x="712.20" y="505.30">300</text>
<text class="d" x="747.60" y="505.30" style="fill:#2d8a2d;stroke:#2d8a2d">75.90</text>
<text class="d" x="793.10" y="505.30" style="fill:#48507e;stroke:#48507e">358.95</text>
<text class="d" x="829.40" y="505.30">31.29</text>
<text class="d" x="885.50" y="505.30">462</text>
<text class="d" x="931.40" y="505.30">-6,225</text>
<text class="d" x="993.80" y="505.30">12,375</text>
<use href="#ci" x="20.6" y="497.00"/>
<use href="#ci" x="1006" y="497.00"/>
<text class="d" x="104.90" y="522.70">225,750</text>
<text class="d" x="156.50" y="522.70">-274,950</text>
<text class="d" x="212.70" y="522.70">28,759</text>
<text class="d" x="249.60" y="522.70">27.12</text>
<text class="d" x="295.40" y="522.70" style="fill:#48507e;stroke:#48507e">0.50</text>
<text class="d" x="341.50" y="522.70" style="fill:#e02a2a;stroke:#e02a2a">-1.50</text>
<text class="d" x="378.30" y="522.70">150</text>
<text class="d" x="423.50" y="522.70">0.50</text>
<text class="d" x="469.50" y="522.70">0.60</text>
<text class="d" x="500.40" y="522.70">3,600</text>
<text class="d" x="552.50" y="522.70" style="fill:#414166;stroke:#414166;stroke-width:0.3px" textLength="46.6" lengthAdjust="spacing">12250.00</text>
<text class="d" x="583.50" y="522.70">75</text>
<text class="d" x="629.50" y="522.70">403.70</text>
<text class="d" x="675.70" y="522.70">416.45</text>
<text class="d" x="712.20" y="522.70">75</text>
<text class="d" x="747.60" y="522.70" style="fill:#2d8a2d;stroke:#2d8a2d">49.95</text>
<text class="d" x="793.10" y="522.70" style="fill:#48507e;stroke:#48507e">402.00</text>
<text class="d" x="829.40" y="522.70">-</text>
<text class="d" x="885.50" y="522.70">5</text>
<text class="d" x="931.40" y="522.70">75</text>
<text class="d" x="993.80" y="522.70">300</text>
<use href="#ci" x="20.6" y="514.40"/>
<use href="#ci" x="1006" y="514.40"/>
<text class="d" x="104.90" y="540.10">659,700</text>
<text class="d" x="156.50" y="540.10">-292,500</text>
<text class="d" x="212.70" y="540.10">62,793</text>
<text class="d" x="249.60" y="540.10">29.97</text>
<text class="d" x="295.40" y="540.10" style="fill:#48507e;stroke:#48507e">0.50</text>
<text class="d" x="341.50" y="540.10" style="fill:#e02a2a;stroke:#e02a2a">-0.95</text>
<text class="d" x="378.30" y="540.10">11,850</text>
<text class="d" x="423.50" y="540.10">0.50</text>
<text class="d" x="469.50" y="540.10">0.55</text>
<text class="d" x="500.40" y="540.10">150</text>
<text class="d" x="552.50" y="540.10" style="fill:#414166;stroke:#414166;stroke-width:0.3px" textLength="46.6" lengthAdjust="spacing">12300.00</text>
<text class="d" x="583.50" y="540.10">75</text>
<text class="d" x="629.50" y="540.10">456.40</text>
<text class="d" x="675.70" y="540.10">463.00</text>
<text class="d" x="712.20" y="540.10">225</text>
<text class="d" x="747.60" y="540.10" style="fill:#2d8a2d;stroke:#2d8a2d">87.75</text>
<text class="d" x="793.10" y="540.10" style="fill:#48507e;stroke:#48507e">460.25</text>
<text class="d" x="829.40" y="540.10">41.00</text>
<text class="d" x="885.50" y="540.10">165</text>
<text class="d" x="931.40" y="540.10">-7,800</text>
<text class="d" x="993.80" y="540.10">29,250</text>
<use href="#ci" x="20.6" y="531.80"/>
<use href="#ci" x="1006" y="531.80"/>
<text class="d" x="104.90" y="557.50">25,575</text>
<text class="d" x="156.50" y="557.50">-43,650</text>
<text class="d" x="212.70" y="557.50">2,200</text>
<text class="d" x="249.60" y="557.50">31.94</text>
<text class="d" x="295.40" y="557.50" style="fill:#48507e;stroke:#48507e">0.40</text>
<text class="d" x="341.50" y="557.50" style="fill:#e02a2a;stroke:#e02a2a">-0.80</text>
<text class="d" x="378.30" y="557.50">2,100</text>
<text class="d" x="423.50" y="557.50">0.40</text>
<text class="d" x="469.50" y="557.50">0.65</text>
<text class="d" x="500.40" y="557.50">75</text>
<text class="d" x="552.50" y="557.50" style="fill:#414166;stroke:#414166;stroke-width:0.3px" textLength="46.6" lengthAdjust="spacing">12350.00</text>
<text class="d" x="583.50" y="557.50">75</text>
<text class="d" x="629.50" y="557.50">504.15</text>
<text class="d" x="675.70" y="557.50">516.50</text>
<text class="d" x="712.20" y="557.50">75</text>
<text class="d" x="747.60" y="557.50" style="fill:#e02a2a;stroke:#e02a2a">-38.00</text>
<text class="d" x="793.10" y="557.50" style="fill:#48507e;stroke:#48507e">451.05</text>
<text class="d" x="829.40" y="557.50">-</text>
<text class="d" x="885.50" y="557.50">1</text>
<text class="d" x="931.40" y="557.50">75</text>
<text class="d" x="993.80" y="557.50">450</text>
<use href="#ci" x="20.6" y="549.20"/>
<use href="#ci" x="1006" y="549.20"/>
<text class="d" x="104.90" y="574.90">152,775</text>
<text class="d" x="156.50" y="574.90">-53,100</text>
<text class="d" x="212.70" y="574.90">14,525</text>
<text class="d" x="249.60" y="574.90">32.19</text>
<text class="d" x="295.40" y="574.90" style="fill:#48507e;stroke:#48507e">0.20</text>
<text class="d" x="341.50" y="574.90" style="fill:#e02a2a;stroke:#e02a2a">-0.70</text>
<text class="d" x="378.30" y="574.90">3,150</text>
<text class="d" x="423.50" y="574.90">0.20</text>
<text class="d" x="469.50" y="574.90">0.45</text>
<text class="d" x="500.40" y="574.90">75</text>
<text class="d" x="552.50" y="574.90" style="fill:#414166;stroke:#414166;stroke-width:0.3px" textLength="46.6" lengthAdjust="spacing">12400.00</text>
<text class="d" x="583.50" y="574.90">75</text>
<text class="d" x="629.50" y="574.90">553.95</text>
<text class="d" x="675.70" y="574.90">566.30</text>
<text class="d" x="712.20" y="574.90">75</text>
<text class="d" x="747.60" y="574.90" style="fill:#2d8a2d;stroke:#2d8a2d">0.80</text>
<text class="d" x="793.10" y="574.90" style="fill:#48507e;stroke:#48507e">501.10</text>
<text class="d" x="829.40" y="574.90">-</text>
<text class="d" x="885.50" y="574.90">4</text>
<text class="d" x="931.40" y="574.90">-</text>
<text class="d" x="993.80" y="574.90">1,125</text>
<use href="#ci" x="20.6" y="566.60"/>
<use href="#ci" x="1006" y="566.60"/>
<text class="d" x="104.90" y="592.30">10,200</text>
<text class="d" x="156.50" y="592.30">-3,150</text>
<text class="d" x="212.70" y="592.30">97</text>
<text class="d" x="249.60" y="592.30">37.33</text>
<text class="d" x="295.40" y="592.30" style="fill:#48507e;stroke:#48507e">0.40</text>
<text class="d" x="341.50" y="592.30" style="fill:#e02a2a;stroke:#e02a2a">-0.35</text>
<text class="d" x="378.30" y="592.30">4,500</text>
<text class="d" x="423.50" y="592.30">0.25</text>
<text class="d" x="469.50" y="592.30">1.45</text>
<text class="d" x="500.40" y="592.30">1,200</text>
<text class="d" x="552.50" y="592.30" style="fill:#414166;stroke:#414166;stroke-width:0.3px" textLength="46.6" lengthAdjust="spacing">12450.00</text>
<text class="d" x="583.50" y="592.30">75</text>
<text class="d" x="629.50" y="592.30">604.00</text>
<text class="d" x="675.70" y="592.30">617.30</text>
<text class="d" x="712.20" y="592.30">75</text>
<text class="d" x="747.60" y="592.30" style="fill:#e02a2a;stroke:#e02a2a">-18.50</text>
<text class="d" x="793.10" y="592.30" style="fill:#48507e;stroke:#48507e">531.65</text>
<text class="d" x="829.40" y="592.30">-</text>
<text class="d" x="885.50" y="592.30">2</text>
<text class="d" x="931.40" y="592.30">150</text>
<text class="d" x="993.80" y="592.30">2,675</text>
<use href="#ci" x="20.6" y="584.00"/>
<use href="#ci" x="1006" y="584.00"/>
<text class="d" x="104.90" y="609.70">1,241,550</text>
<text class="d" x="156.50" y="609.70">-158,925</text>
<text class="d" x="212.70" y="609.70">15,198</text>
<text class="d" x="249.60" y="609.70">40.98</text>
<text class="d" x="295.40" y="609.70" style="fill:#48507e;stroke:#48507e">0.50</text>
<text class="d" x="341.50" y="609.70" style="fill:#e02a2a;stroke:#e02a2a">-0.20</text>
<text class="d" x="378.30" y="609.70">6,000</text>
<text class="d" x="423.50" y="609.70">0.40</text>
<text class="d" x="469.50" y="609.70">0.50</text>
<text class="d" x="500.40" y="609.70">2,175</text>
<text class="d" x="552.50" y="609.70" style="fill:#414166;stroke:#414166;stroke-width:0.3px" textLength="46.6" lengthAdjust="spacing">12500.00</text>
<text class="d" x="583.50" y="609.70">75</text>
<text class="d" x="629.50" y="609.70">654.25</text>
<text class="d" x="675.70" y="609.70">666.15</text>
<text class="d" x="712.20" y="609.70">75</text>
<text class="d" x="747.60" y="609.70" style="fill:#2d8a2d;stroke:#2d8a2d">73.90</text>
<text class="d" x="793.10" y="609.70" style="fill:#48507e;stroke:#48507e">656.00</text>
<text class="d" x="829.40" y="609.70">-</text>
<text class="d" x="885.50" y="609.70">82</text>
<text class="d" x="931.40" y="609.70">4,800</text>
<text class="d" x="993.80" y="609.70">6,825</text>
<use href="#ci" x="20.6" y="601.40"/>
<use href="#ci" x="1006" y="601.40"/>
</g>
<g fill="none" clip-path="url(#vp)">
<rect x="42.5" y="356.5" width="514" height="156" stroke="#d23838" stroke-width="1"/>
<rect x="889.5" y="217.5" width="44" height="227" stroke="#d23838" stroke-width="1"/>
<rect x="503.2" y="251.2" width="495.3" height="122.0" stroke="#3f9c58" stroke-width="1.5"/>
<rect x="39.9" y="338.6" width="962.1" height="84.4" stroke="#3a3ab8" stroke-width="1.7"/>
<path d="M26.5 355 L31.6 389 L29.5 389 L29.5 423 L24.3 423 L24.3 389 L22 389 Z" stroke="#3040b0" stroke-width="1.7" stroke-linejoin="miter"/>
</g>
<path d="M1010.9 334.3 L1015.6 368.8 L1013.4 368.8 L1013.4 404 L1008.4 404 L1008.4 368.8 L1006.6 368.8 Z" fill="none" stroke="#3040b0" stroke-width="1.7"/>
<rect x="1015.6" y="27" width="8.399999999999977" height="582.7" fill="#f1f1f1"/>
<rect x="1016.0" y="272.7" width="8.399999999999977" height="148.3" fill="#c1c1c1"/>
<path d="M1018.2 36 L1021 32.6 L1023.8 36 Z" fill="#505050"/>
<path d="M1018.8 600.8 L1021.6 603.6 L1024.4 600.8 Z" fill="#505050"/>
<path d="M1010.9 334.3 L1015.6 368.8 L1013.4 368.8 L1013.4 404 L1008.4 404 L1008.4 368.8 L1006.6 368.8 Z" fill="none" stroke="#3040b0" stroke-width="1.7"/>
<rect x="938.9" y="572.8" width="38.1" height="37" fill="#3d3d3d"/>
<circle cx="956.7" cy="593.1" r="8.6" fill="none" stroke="#e2e2e2" stroke-width="1.2"/>
<path d="M953.6 589.9 L959.4 593.3 L953.6 596.7" fill="none" stroke="#e2e2e2" stroke-width="1.6"/>
<rect x="0" y="609.7" width="1024" height="12.199999999999932" fill="#c6c6c6"/>
<rect x="987.2" y="609.7" width="28.2" height="12.0" fill="#eeeeee"/>
<rect x="1015.6" y="609.7" width="9" height="12.199999999999932" fill="#dddddd"/>
<path d="M1007.2 612.8 L1010.4 615.9 L1007.2 619 Z" fill="#444"/>
<rect x="666.2" y="614.6" width="30" height="4.4" fill="#4a52d0"/>
<rect x="0" y="622" width="1024" height="31" fill="#464646"/>
<rect x="9.6" y="622" width="264.6" height="31" fill="#f2f2f2"/>
<circle cx="26.2" cy="634.6" r="3.8" fill="none" stroke="#333" stroke-width="1.1"/>
<path d="M23.6 637.5 L19 642.4" stroke="#333" stroke-width="1.2" fill="none"/>
<text x="40.2" y="641.5" style="font-size:11.2px;fill:#4c4c4c">Type here to search</text>
<circle cx="293" cy="637.6" r="5.3" fill="none" stroke="#f4f4f4" stroke-width="1.6"/>
<g stroke="#e6e6e6" stroke-width="1.1" fill="none"><rect x="325.6" y="634.2" width="6" height="6.8"/><path d="M324 632.2 h9 M324 643 h9 M335.4 633 v2 M335.4 636.6 v2 M335.4 640.4 v2"/></g>
<g><rect x="362" y="631" width="14.6" height="12.4" rx="1.5" fill="#f3d57a"/><path d="M363 633.6 L369.3 639 L375.6 633.6" fill="none" stroke="#fff4c4" stroke-width="1.3"/><rect x="365" y="628.8" width="10" height="4" fill="#f7e6a8"/></g>
<rect x="388.7" y="622" width="37.5" height="31" fill="#666666"/>
<g><circle cx="407.2" cy="637.2" r="8.4" fill="#e8453c"/><path d="M407.2 637.2 L400 633 A8.4 8.4 0 0 0 405.6 645.4 Z" fill="#34a853"/><path d="M407.2 637.2 L405.6 645.4 A8.4 8.4 0 0 0 415.6 637.2 L414.6 633.4 Z" fill="#fbc116"/><circle cx="407.2" cy="637.2" r="3.9" fill="#f4f4f4"/><circle cx="407.2" cy="637.2" r="3" fill="#4a8af4"/></g>
<g><path d="M436.6 630.2 h6 l1.4 1.6 h9.6 v11.6 h-17 Z" fill="#f4c64e"/><rect x="439.6" y="637.4" width="11" height="6" fill="#4a9be0"/><rect x="441.8" y="639.6" width="6.6" height="3.8" fill="#f4c64e"/></g>
<g><rect x="476.6" y="629.4" width="13.6" height="14.6" rx="1" fill="#dfe9d8"/><rect x="475" y="631.6" width="9" height="10.6" fill="#cfe3c2"/><text x="476.4" y="640.6" style="font-size:8.6px;font-weight:bold;fill:#3f7a3a">X</text><path d="M485 632.6 h4.4 M485 635.6 h4.4 M485 638.6 h4.4 M485 641.4 h4.4" stroke="#6a9a5a" stroke-width="1"/></g>
<rect x="388.7" y="651" width="37.5" height="1" fill="#86acd8"/>
<rect x="429.6" y="651" width="31.0" height="1" fill="#86acd8"/>
<rect x="467.6" y="651" width="31.0" height="1" fill="#86acd8"/>
<path d="M779.6 639.6 L784.2 635 L788.8 639.6" fill="none" stroke="#ededed" stroke-width="1.1"/>
<g fill="none" stroke="#e4e4e4" stroke-width="1"><path d="M806.4 641.6 A7 7 0 0 1 813.4 634.6"/><path d="M808.6 641.6 A4.8 4.8 0 0 1 813.4 636.8"/><path d="M810.8 641.6 A2.6 2.6 0 0 1 813.4 639"/></g><circle cx="813" cy="641.4" r="0.9" fill="#e4e4e4"/>
<g fill="none" stroke="#e4e4e4" stroke-width="1"><rect x="829.6" y="634.6" width="9.6" height="5.6"/><path d="M840 636.4 v2"/><path d="M827.6 633 v4 M826.4 634 h2.4"/></g><rect x="830.6" y="635.6" width="3.4" height="3.6" fill="#e4e4e4"/>
<g fill="none" stroke="#e4e4e4" stroke-width="1"><path d="M852.6 636 h2.2 l2.8 -2.6 v8.4 l-2.8 -2.6 h-2.2 Z"/><path d="M859.4 635.6 q1.4 2 0 4 M861.2 634.2 q2.4 3.4 0 6.8"/></g>
<g fill="none" stroke="#e4e4e4" stroke-width="1"><path d="M883 641.4 q-2.6 1.6 -3.4 -0.6 q0 -2.4 2.6 -2 M884.6 640.4 L890 632.6 q1.6 -0.4 1.4 1.4 L886 641.6 Z M888.4 637.6 q3 -0.4 4 1.4"/></g>
<text class="tb" x="906.6" y="641.6" style="font-size:8.8px">ENG</text>
<text class="tb" x="958.4" y="634.4" style="text-anchor:middle;font-size:8.8px">22:21</text>
<text class="tb" x="958.4" y="648.6" style="text-anchor:middle;font-size:8.8px">13-11-2019</text>
<g><path d="M997.6 631.4 h11.4 v8.6 h-7 l-2.4 2.6 v-2.6 h-2 Z" fill="#f0f0f0"/><path d="M999.6 633.8 h7.4 M999.6 635.8 h7.4 M999.6 637.8 h5" stroke="#464646" stroke-width="0.7"/><circle cx="1008.6" cy="642" r="4.4" fill="#464646" stroke="#e8e8e8" stroke-width="0.9"/><text x="1008.6" y="644.8" style="text-anchor:middle;font-size:7.4px;fill:#f2f2f2">4</text></g>
<text class="bk" x="1.7" y="16" textLength="20.5" lengthAdjust="spacingAndGlyphs">Apps</text>
<text class="bk" x="53.1" y="16" textLength="28.9" lengthAdjust="spacingAndGlyphs">Google</text>
<text class="bk" x="113.9" y="16" textLength="86.3" lengthAdjust="spacingAndGlyphs">Sharekhan, Commo...</text>
<text class="bk" x="233.0" y="16" textLength="55.8" lengthAdjust="spacingAndGlyphs">Investing.com</text>
<text class="bk" x="320.9" y="16" textLength="49.5" lengthAdjust="spacingAndGlyphs">TradingView</text>
<text class="bk" x="402.3" y="16" textLength="58.7" lengthAdjust="spacingAndGlyphs">money control</text>
<text class="bk" x="493.6" y="16" textLength="75.4" lengthAdjust="spacingAndGlyphs">Nifty Option Chain</text>
<text class="bk" x="603.9" y="16" textLength="68.5" lengthAdjust="spacingAndGlyphs">Praj Mohan Joshi</text>
<text class="bk" x="704.9" y="16" textLength="44.2" lengthAdjust="spacingAndGlyphs">Screener.in</text>
<text class="bk" x="781.6" y="16" textLength="66.0" lengthAdjust="spacingAndGlyphs">Praj Investments</text>
<text class="bk" x="879.2" y="16" textLength="41.2" lengthAdjust="spacingAndGlyphs">MJ Twitter</text>
<text class="bk" x="1007.6" y="15.6" style="font-size:9px">»</text>
<g fill="none" stroke-width="1.7"><path d="M43.6 10.2 A3.7 3.7 0 0 0 37.2 10.9" stroke="#ea4335"/><path d="M37.2 10.9 A3.7 3.7 0 0 0 37.4 15.1" stroke="#fbbc05"/><path d="M37.4 15.1 A3.7 3.7 0 0 0 43.2 15.7" stroke="#34a853"/><path d="M43.2 15.7 A3.7 3.7 0 0 0 44.2 12.9 H40.8" stroke="#4285f4"/></g>
<rect x="97.6" y="7.4" width="8.6" height="10.4" rx="1" fill="#f7cfc4"/>
<rect x="214.2" y="7" width="12.4" height="11.4" fill="#2a2a2a"/><text x="215" y="15.8" style="font-size:7px;font-weight:bold;fill:#fff">Inv</text>
<path d="M303.4 15.4 q-0.6 -3 2.4 -3.2 q1.8 -2.8 4.4 -0.2 q2.6 0.4 2 3.4 Z" fill="#3a8fd6"/>
<rect x="383.4" y="7.2" width="11.6" height="11.4" rx="1.4" fill="#2f6db0"/><text x="386" y="16.2" style="font-size:8px;font-weight:bold;fill:#fff">₹</text>
<circle cx="480.6" cy="13" r="4.2" fill="#e8682a"/><circle cx="480.6" cy="13" r="1.6" fill="#fff"/>
<rect x="586" y="7" width="11.6" height="11.6" fill="#3b5998"/><text x="590.6" y="17.6" style="font-size:10px;font-weight:bold;fill:#fff">f</text>
<rect x="686" y="7" width="12" height="11.6" fill="#2f3a1a"/><path d="M688.4 17.4 v-4 M691 17.4 v-6 M693.6 17.4 v-8 M696 17.4 v-9" stroke="#8fd03a" stroke-width="1.6"/>
<circle cx="767" cy="12.8" r="5.2" fill="#6a5a12"/><circle cx="767" cy="12.8" r="2.6" fill="#c8a820"/>
<path d="M862.4 9.6 q2.4 2.6 5.2 2.4 q0 -3 2.8 -2.8 q1.2 0.2 1.6 0.8 l1.6 -0.4 l-1 1.4 q0.4 6 -5.6 6.8 q-3 0.2 -5 -1.2 q2.4 0 3.4 -1.2 q-2 -0.4 -2.4 -2 q-1.2 -1.8 -0.6 -3.8 Z" fill="#1da1f2"/>
</svg></body></html>
